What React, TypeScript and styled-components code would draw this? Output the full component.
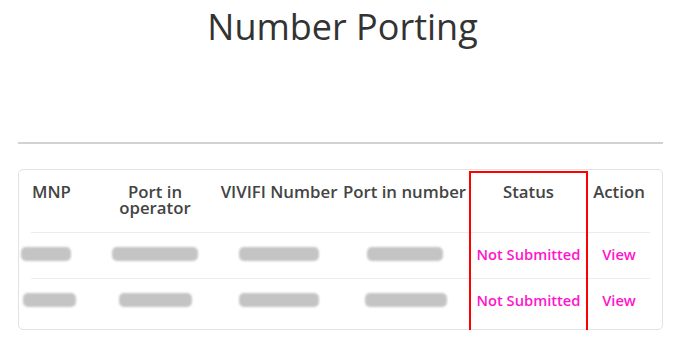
import React from 'react';
import styled, { createGlobalStyle } from 'styled-components';

const GlobalStyle = createGlobalStyle`
  body {
    margin: 0;
    background: #fff;
    font-family: 'Open Sans', 'Liberation Sans', sans-serif;
  }
`;

const Page = styled.div`
  padding: 0 14px 0 18px;
`;

const Title = styled.h1`
  margin: 4px 0 0;
  padding-left: 4px;
  text-align: center;
  font-size: 36px;
  font-weight: 400;
  color: #333;
  line-height: 46px;
`;

const Divider = styled.hr`
  margin: 92px 0 0;
  border: none;
  border-top: 2px solid #d2d2d2;
`;

const Card = styled.div`
  position: relative;
  margin-top: 25px;
  border: 1px solid #e2e2e2;
  border-radius: 5px;
  padding: 0 12px 4px;
`;

const COLUMNS = '61px 126px 122px 129px 119px 62px';

const HeadRow = styled.div`
  display: grid;
  grid-template-columns: ${COLUMNS};
  border-bottom: 1px solid #ececec;
`;

const Row = styled.div<{ $last?: boolean }>`
  display: grid;
  grid-template-columns: ${COLUMNS};
  box-sizing: border-box;
  height: 46px;
  padding-bottom: 4px;
  align-items: center;
  border-bottom: 1px solid ${(p) => (p.$last ? 'transparent' : '#ececec')};
`;

const HeadCell = styled.div<{ $left?: boolean }>`
  padding: 14px 1px 16px;
  text-align: ${(p) => (p.$left ? 'left' : 'center')};
  font-size: 16.8px;
  line-height: 16px;
  font-weight: 600;
  color: #444;
  white-space: pre-line;
`;

const Cell = styled.div<{ $left?: boolean }>`
  display: flex;
  justify-content: ${(p) => (p.$left ? 'flex-start' : 'center')};
  font-size: 14.7px;
  font-weight: 600;
`;

const StatusText = styled.span`
  color: #ff14cc;
`;

const Link = styled.a`
  color: #ff14cc;
  text-decoration: none;
  cursor: pointer;
`;

const Masked = styled.span<{ $w: number; $shift?: number }>`
  display: block;
  width: ${(p) => p.$w}px;
  height: 14px;
  margin-left: ${(p) => p.$shift ?? 0}px;
  border-radius: 5px;
  background: #c4c4c4;
  filter: blur(1px);
`;

const Highlight = styled.div`
  position: absolute;
  left: 450px;
  top: 1px;
  width: 119px;
  height: 161px;
  box-sizing: border-box;
  border: 2px solid #ff0000;
  pointer-events: none;
`;

const rows = [
  { mnp: [50, -10], operator: [86, 0], vivifi: [80, 0], number: [76, 0] },
  { mnp: [53, -8], operator: [73, 0], vivifi: [80, 0], number: [82, 2] },
];

export default function App() {
  return (
    <>
      <GlobalStyle />
      <Page>
        <Title>Number Porting</Title>
        <Divider />
        <Card>
          <HeadRow>
            <HeadCell $left>MNP</HeadCell>
            <HeadCell>{'Port in\noperator'}</HeadCell>
            <HeadCell>VIVIFI Number</HeadCell>
            <HeadCell>Port in number</HeadCell>
            <HeadCell>Status</HeadCell>
            <HeadCell>Action</HeadCell>
          </HeadRow>
          {rows.map((r, i) => (
            <Row key={i} $last={i === rows.length - 1}>
              <Cell $left>
                <Masked $w={r.mnp[0]} $shift={r.mnp[1]} />
              </Cell>
              <Cell>
                <Masked $w={r.operator[0]} $shift={r.operator[1]} />
              </Cell>
              <Cell>
                <Masked $w={r.vivifi[0]} $shift={r.vivifi[1]} />
              </Cell>
              <Cell>
                <Masked $w={r.number[0]} $shift={r.number[1]} />
              </Cell>
              <Cell>
                <StatusText>Not Submitted</StatusText>
              </Cell>
              <Cell>
                <Link>View</Link>
              </Cell>
            </Row>
          ))}
          <Highlight />
        </Card>
      </Page>
    </>
  );
}
